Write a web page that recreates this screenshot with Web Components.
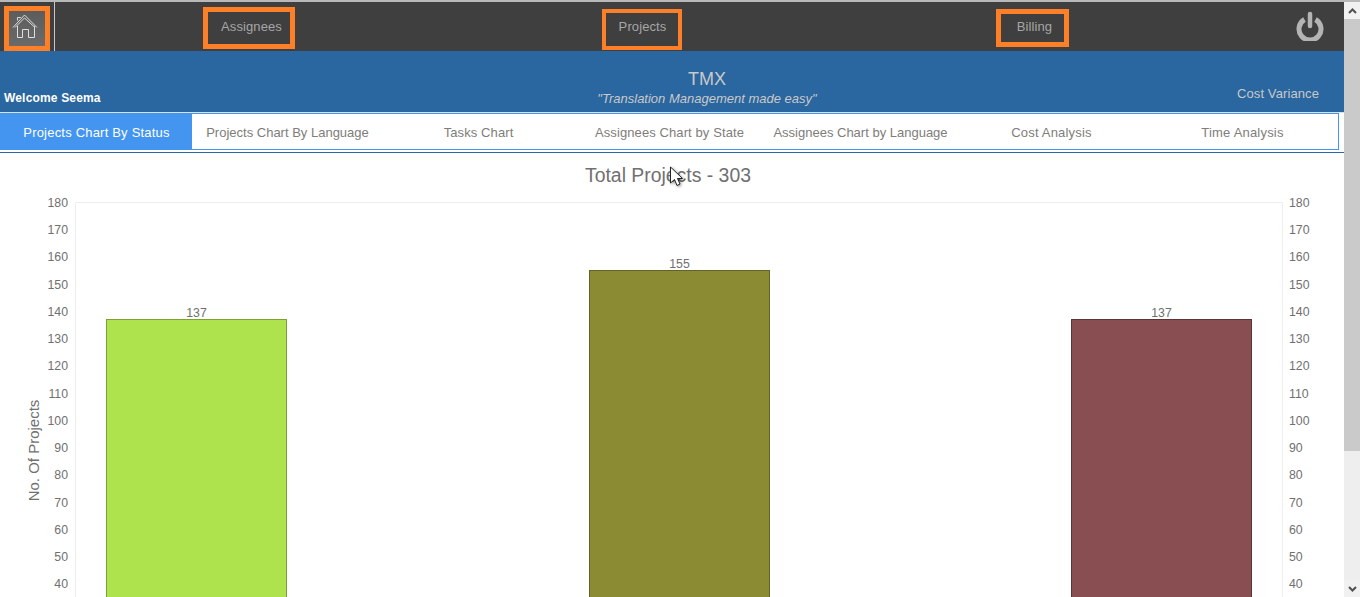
<!DOCTYPE html>
<html>
<head>
<meta charset="utf-8">
<title>TMX</title>
<style>
    html, body { margin: 0; height: 100%; overflow: hidden; background: #fff; }
    body { font-family: "Liberation Sans", Arial, sans-serif; }
    #page { display: flex; height: 597px; }
    #main { flex: 1; min-width: 0; overflow: hidden; position: relative; }
</style>
</head>
<body>
<div id="page">
    <div id="main">
        <top-nav>
            <nav-link slot="links" style="--w:92px;--h:42px;--gap:5px;--top:5px;--ml:148px;--pl:5px;--pt:7px">Assignees</nav-link>
            <nav-link slot="links" style="--w:80px;--h:41px;--gap:4px;--top:7px;--ml:307px;--pl:1px;--pt:6px">Projects</nav-link>
            <nav-link slot="links" style="--w:73px;--h:38px;--gap:5px;--top:7px;--ml:314px;--pl:4px;--pt:5px">Billing</nav-link>
        </top-nav>
        <brand-bar user="Seema"></brand-bar>
        <tab-strip>
            <chart-tab active style="letter-spacing:.2px">Projects Chart By Status</chart-tab>
            <chart-tab style="letter-spacing:0">Projects Chart By Language</chart-tab>
            <chart-tab>Tasks Chart</chart-tab>
            <chart-tab>Assignees Chart by State</chart-tab>
            <chart-tab style="letter-spacing:0">Assignees Chart by Language</chart-tab>
            <chart-tab style="letter-spacing:.2px">Cost Analysis</chart-tab>
            <chart-tab style="letter-spacing:.2px">Time Analysis</chart-tab>
        </tab-strip>
        <bar-chart></bar-chart>
        <mouse-cursor></mouse-cursor>
    </div>
    <page-scrollbar></page-scrollbar>
</div>

<script>
class TopNav extends HTMLElement {
    constructor() {
        super();
        this.attachShadow({ mode: 'open' });
        this.shadowRoot.innerHTML = `
            <style>
                :host {
                    display: flex;
                    height: 49px;
                    background: #3f3f3f;
                    border-top: 2px solid #b9b9b9;
                    align-items: stretch;
                    position: relative;
                }
                .home {
                    box-sizing: border-box;
                    width: 46px;
                    height: 45px;
                    margin: 4px 0 0 4px;
                    border: 5px solid #fd7f27;
                    background: linear-gradient(#5c5c5c, #6a6a6a);
                    padding: 2px 0 0 3px;
                }
                .home svg { display: block; }
                .rule { width: 1px; background: #c8c8c8; margin-left: 4px; }
                .links { display: flex; flex: 1; align-items: flex-start; }
                .power { width: 28px; height: 30px; margin: 9px 20px 0 0; }
            </style>
            <div class="home">
                <svg width="26" height="26" viewBox="0 0 26 26" fill="none" stroke="#dedede" stroke-width="1">
                    <path d="M1 14.500 L12.500 2 L25 14.500"/>
                    <path d="M3 14.500 L12.500 5 L23 14.500"/>
                    <path d="M5.500 7.500 V4.500 H8.500 V5"/>
                    <path d="M5.500 13 V24.500 H10.500 V16.500 H16.500 V24.500 H22.500 V13"/>
                </svg>
            </div>
            <div class="rule"></div>
            <div class="links"><slot name="links"></slot></div>
            <svg class="power" viewBox="0 0 28 30" fill="none" stroke="#b4b4b4" stroke-linecap="butt">
                <path d="M8.500 8.500 A11 11 0 1 0 19.500 8.500" stroke-width="5"/>
                <path d="M14 3 V15" stroke-width="4.500" stroke-linecap="round"/>
            </svg>
        `;
    }
}

class NavLink extends HTMLElement {
    constructor() {
        super();
        this.attachShadow({ mode: 'open' });
        this.shadowRoot.innerHTML = `
            <style>
                :host {
                    box-sizing: border-box;
                    display: block;
                    width: var(--w);
                    height: var(--h);
                    margin: var(--top) 0 0 var(--ml);
                    border: var(--gap) solid #fd7f27;
                    color: #a6a6a6;
                    font-size: 13px;
                    letter-spacing: .1px;
                    text-align: center;
                    padding-top: var(--pt);
                    padding-left: var(--pl);
                    line-height: 15px;
                }
            </style>
            <slot></slot>
        `;
    }
}

class BrandBar extends HTMLElement {
    constructor() {
        super();
        this.attachShadow({ mode: 'open' });
        const user = this.getAttribute('user');
        this.shadowRoot.innerHTML = `
            <style>
                :host {
                    display: grid;
                    grid-template-columns: 1fr auto 1fr;
                    height: 61px;
                    background: #2a669f;
                    border-bottom: 1px solid #d6e2ee;
                    box-sizing: content-box;
                }
                .welcome { align-self: end; padding: 0 0 7px 4px; color: #fff; font-size: 12px; font-weight: bold; letter-spacing: .17px; line-height: 14px; }
                .mid { text-align: center; color: #c9c9c9; padding: 18px 0 0 70px; }
                .name { font-size: 18px; line-height: 20px; }
                .tag { font-size: 13px; font-style: italic; line-height: 14px; margin-top: 3px; }
                .cost { justify-self: end; align-self: end; padding: 0 25px 11px 0; color: #c9c9c9; font-size: 13px; letter-spacing: .1px; line-height: 15px; }
            </style>
            <div class="welcome">Welcome ${user}</div>
            <div class="mid">
                <div class="name">TMX</div>
                <div class="tag">"Translation Management made easy"</div>
            </div>
            <div class="cost">Cost Variance</div>
        `;
    }
}

class TabStrip extends HTMLElement {
    constructor() {
        super();
        this.attachShadow({ mode: 'open' });
        this.shadowRoot.innerHTML = `
            <style>
                :host { display: block; padding-bottom: 2px; border-bottom: 1px solid #2a669f; }
                .strip {
                    display: grid;
                    grid-template-columns: repeat(7, 1fr);
                    box-sizing: border-box;
                    width: 1339px;
                    height: 37px;
                    border: 1px solid #4395ef;
                    background: #fff;
                }
            </style>
            <div class="strip"><slot></slot></div>
        `;
    }
}

class ChartTab extends HTMLElement {
    constructor() {
        super();
        this.attachShadow({ mode: 'open' });
        this.shadowRoot.innerHTML = `
            <style>
                :host {
                    display: flex;
                    align-items: center;
                    justify-content: center;
                    padding-top: 1px;
                    color: #807d7a;
                    font-size: 13px;
                    letter-spacing: .1px;
                    white-space: nowrap;
                }
                :host([active]) { background: #4395ef; color: #fff; }
            </style>
            <slot></slot>
        `;
    }
}

class BarChart extends HTMLElement {
    constructor() {
        super();
        this.attachShadow({ mode: 'open' });
        this.bars = [
            { value: 137, x: 106.5, fill: '#afe34e', line: '#7f9f3a' },
            { value: 155, x: 589.5, fill: '#8b8b33', line: '#62622a' },
            { value: 137, x: 1071.5, fill: '#894e51', line: '#5c3436' }
        ];
        this.render();
    }

    y(value) {
        return 202 + (180 - value) * 2.725;
    }

    render() {
        const top = 153;
        let ticks = '';
        for (let v = 180; v >= 40; v -= 10) {
            const py = Math.ceil(this.y(v) - .5) - top + 5;
            ticks += `<text x="68" y="${py}" text-anchor="end">${v}</text>`;
            ticks += `<text x="1289" y="${py}">${v}</text>`;
        }
        let bars = '';
        for (const b of this.bars) {
            const py = Math.floor(this.y(b.value)) + .5 - top;
            bars += `<rect x="${b.x}" y="${py}" width="180" height="400" fill="${b.fill}" stroke="${b.line}"/>`;
            bars += `<text x="${b.x + 90}" y="${py - 2.500}" text-anchor="middle">${b.value}</text>`;
        }
        this.shadowRoot.innerHTML = `
            <style>
                :host { display: block; height: 444px; overflow: hidden; }
                svg { display: block; }
                text { font-family: "Liberation Sans", Arial, sans-serif; font-size: 12.3px; fill: #707070; }
                .title { font-size: 19.4px; fill: #707070; }
                .axis { font-size: 15px; fill: #707070; }
            </style>
            <svg width="1345" height="444">
                <text class="title" x="668" y="28.500" text-anchor="middle">Total Projects - 303</text>
                <path d="M75.500 444 V49.500 H1282.500 V444" fill="none" stroke="#eeeeee"/>
                ${ticks}
                <text class="axis" transform="translate(39,297.500) rotate(-90)" text-anchor="middle">No. Of Projects</text>
                ${bars}
            </svg>
        `;
    }
}

class MouseCursor extends HTMLElement {
    constructor() {
        super();
        this.attachShadow({ mode: 'open' });
        this.shadowRoot.innerHTML = `
            <style>
                :host { position: absolute; left: 670px; top: 166px; width: 16px; height: 22px; }
                svg { display: block; overflow: visible; filter: drop-shadow(1.500px 1.500px 1.500px rgba(0,0,0,.45)); }
            </style>
            <svg width="16" height="22" viewBox="0 0 16 22">
                <path d="M.500 1 V17 L4.500 13.500 L7 19.500 L10 18 L7.500 12.500 H12.500 Z" fill="#fff" stroke="#222" stroke-width="1"/>
            </svg>
        `;
    }
}

class PageScrollbar extends HTMLElement {
    constructor() {
        super();
        this.attachShadow({ mode: 'open' });
        this.shadowRoot.innerHTML = `
            <style>
                :host { display: flex; flex-direction: column; width: 16px; height: 597px; box-sizing: border-box; border-top: 2px solid #b9b9b9; background: #eeeeee; flex: none; }
                .arrow { height: 17px; display: flex; align-items: center; justify-content: center; flex: none; background: #f1f1f1; }
                .thumb { height: 432px; background: #cacaca; flex: none; }
                .track { flex: 1; }
            </style>
            <div class="arrow"><svg width="9" height="6" viewBox="0 0 9 6" fill="none" stroke="#505050" stroke-width="2"><path d="M1 5 L4.500 1.500 L8 5"/></svg></div>
            <div class="thumb"></div>
            <div class="track"></div>
            <div class="arrow"><svg width="9" height="6" viewBox="0 0 9 6" fill="none" stroke="#505050" stroke-width="2"><path d="M1 1 L4.500 4.500 L8 1"/></svg></div>
        `;
    }
}

customElements.define('top-nav', TopNav);
customElements.define('nav-link', NavLink);
customElements.define('brand-bar', BrandBar);
customElements.define('tab-strip', TabStrip);
customElements.define('chart-tab', ChartTab);
customElements.define('bar-chart', BarChart);
customElements.define('mouse-cursor', MouseCursor);
customElements.define('page-scrollbar', PageScrollbar);
</script>
</body>
</html>
